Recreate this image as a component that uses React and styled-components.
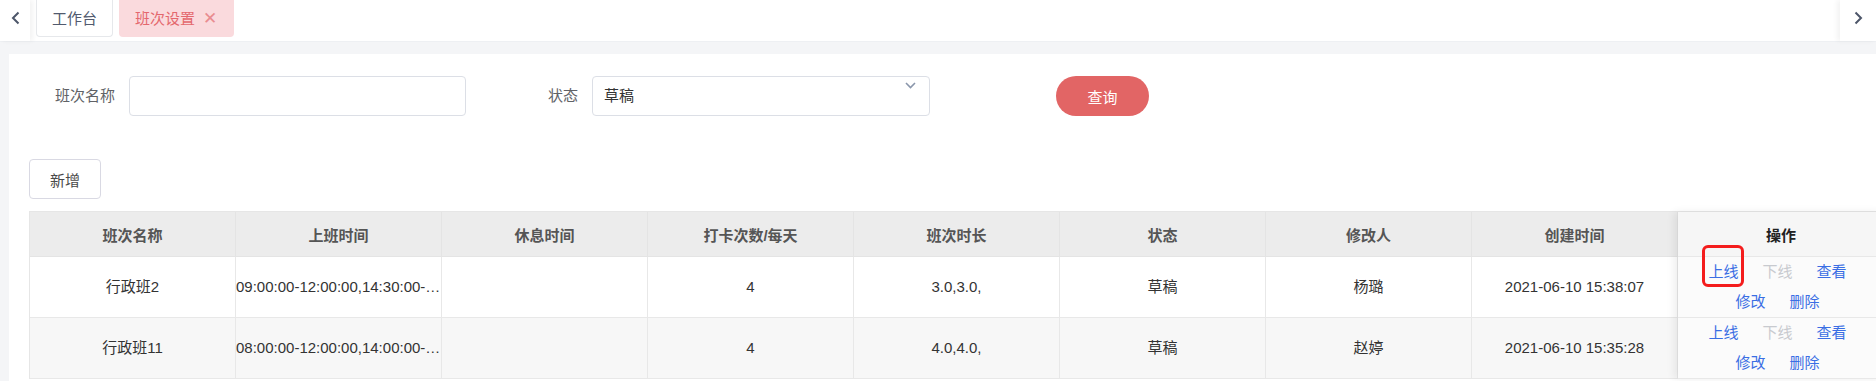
import React from "react";
import styled, { createGlobalStyle } from "styled-components";

const GlobalStyle = createGlobalStyle`
  * { box-sizing: border-box; }
  html, body { margin: 0; padding: 0; background: #f4f5f7; overflow: hidden; }
  body {
    font-family: "Liberation Sans", "Noto Sans CJK SC", sans-serif;
    font-size: 15px;
    color: #333;
  }
`;

const Page = styled.div`
  width: 1876px;
  height: 381px;
  overflow: hidden;
  background: #f4f5f7;
  display: flex;
  flex-direction: column;
`;

const TopBar = styled.div`
  height: 42px;
  flex: none;
  background: #fff;
  display: flex;
  border-bottom: 1px solid #eef0f3;
`;

const ScrollBtn = styled.div`
  width: ${(p) => p.$w}px;
  flex: none;
  display: flex;
  justify-content: center;
  padding-top: 11px;
  background: #fff;
  color: #515a6e;
  box-shadow: ${(p) =>
    p.$side === "left" ? "3px 0 5px rgba(0,0,0,0.05)" : "-3px 0 5px rgba(0,0,0,0.05)"};
`;

const Tabs = styled.div`
  flex: 1;
  display: flex;
  align-items: flex-start;
  gap: 6px;
  padding-left: 6px;
`;

const Tab = styled.div`
  height: 37px;
  display: flex;
  align-items: center;
  gap: 8px;
  padding: ${(p) => (p.$active ? "0 16px 0 15px" : "0 15px")};
  border: 1px solid ${(p) => (p.$active ? "transparent" : "#e6e8eb")};
  border-top: none;
  border-radius: 0 0 4px 4px;
  background: ${(p) => (p.$active ? "#fadadd" : "#fff")};
  color: ${(p) => (p.$active ? "#e4686d" : "#515a6e")};
  line-height: 1;
`;

const CloseMark = styled.span`
  color: #e98c90;
  font-size: 17px;
  line-height: 1;
  width: 14px;
  text-align: center;
`;

const Main = styled.div`
  flex: 1;
  padding: 12px 0 0 9px;
  min-height: 0;
`;

const Panel = styled.div`
  width: 1900px;
  height: 100%;
  background: #fff;
  padding: 22px 20px 0 20px;
`;

const FormRow = styled.div`
  display: flex;
  align-items: center;
  height: 40px;
`;

const FormItem = styled.div`
  display: flex;
  align-items: center;
  margin-right: ${(p) => p.$mr || 0}px;
`;

const Label = styled.label`
  width: 100px;
  padding-right: 14px;
  text-align: right;
  color: #606266;
  line-height: 40px;
`;

const Input = styled.div`
  width: ${(p) => p.$w}px;
  height: 40px;
  border: 1px solid #dcdfe6;
  border-radius: 4px;
  background: #fff;
`;

const Select = styled.div`
  width: 338px;
  height: 40px;
  border: 1px solid #dcdfe6;
  border-radius: 4px;
  background: #fff;
  display: flex;
  justify-content: space-between;
  padding: 0 13px 0 11px;
`;

const SelectValue = styled.span`
  line-height: 38px;
  color: #333;
`;

const Chevron = styled.svg`
  margin-top: 5px;
  flex: none;
`;

const QueryButton = styled.button`
  width: 93px;
  height: 40px;
  border: none;
  border-radius: 20px;
  background: #e26565;
  color: #fff;
  font: inherit;
  padding: 0;
`;

const AddButton = styled.button`
  margin-top: 43px;
  width: 72px;
  height: 40px;
  border: 1px solid #d9d9e3;
  border-radius: 4px;
  background: #fff;
  color: #4a4a4a;
  font: inherit;
  padding: 0;
`;

const Table = styled.div`
  margin-top: 12px;
  display: flex;
  border-top: 1px solid #e6e6e6;
`;

const Grid = styled.div`
  display: grid;
  grid-template-columns: repeat(8, 206px);
  grid-auto-rows: auto;
  border-left: 1px solid #e6e6e6;
`;

const HeadCell = styled.div`
  height: 45px;
  display: flex;
  align-items: center;
  justify-content: center;
  background: #ececec;
  border-right: 1px solid #e4e4e4;
  border-bottom: 1px solid #e4e4e4;
  color: #555;
  font-weight: 700;
`;

const Cell = styled.div`
  height: 61px;
  line-height: 60px;
  padding: 0;
  text-align: center;
  white-space: nowrap;
  overflow: hidden;
  text-overflow: ellipsis;
  background: ${(p) => (p.$stripe ? "#f7f7f7" : "#fff")};
  border-right: 1px solid #e8e8e8;
  border-bottom: 1px solid #e8e8e8;
  color: #333;
`;

const OpsColumn = styled.div`
  width: 206px;
  flex: none;
  display: flex;
  flex-direction: column;
  box-shadow: -4px 0 8px rgba(0, 0, 0, 0.07);
`;

const OpsHead = styled.div`
  height: 45px;
  display: flex;
  align-items: center;
  justify-content: center;
  background: #f6f6f6;
  border-bottom: 1px solid #e8e8e8;
  color: #222;
  font-weight: 700;
`;

const OpsCell = styled.div`
  height: 61px;
  background: #fbfbfb;
  border-bottom: 1px solid #e8e8e8;
  display: flex;
  flex-wrap: wrap;
  justify-content: center;
  align-content: flex-start;
  padding: 0 17px 0 10px;
`;

const Link = styled.span`
  position: relative;
  margin: 0 12px;
  line-height: 30px;
  height: 30px;
  color: ${(p) => (p.$disabled ? "#c8cacf" : "#3a6ee4")};
`;

const Highlight = styled.span`
  position: absolute;
  left: -6px;
  right: -6px;
  top: -12px;
  bottom: 0;
  border: 3px solid #f41d1d;
  border-radius: 6px;
`;

const columns = ["班次名称", "上班时间", "休息时间", "打卡次数/每天", "班次时长", "状态", "修改人", "创建时间"];

const rows = [
  ["行政班2", "09:00:00-12:00:00,14:30:00-18:00:00", "", "4", "3.0,3.0,", "草稿", "杨璐", "2021-06-10 15:38:07"],
  ["行政班11", "08:00:00-12:00:00,14:00:00-18:00:00", "", "4", "4.0,4.0,", "草稿", "赵婷", "2021-06-10 15:35:28"],
];

const Arrow = ({ dir }) => (
  <svg width="9" height="14" viewBox="0 0 9 14">
    <path
      d={dir === "left" ? "M7.5 1.5 L2 7 L7.5 12.5" : "M1.5 1.5 L7 7 L1.5 12.5"}
      fill="none"
      stroke="#4d5669"
      strokeWidth="2"
    />
  </svg>
);

export default function App() {
  return (
    <Page>
      <GlobalStyle />
      <TopBar>
        <ScrollBtn $w={30} $side="left">
          <Arrow dir="left" />
        </ScrollBtn>
        <Tabs>
          <Tab>工作台</Tab>
          <Tab $active>
            班次设置
            <CloseMark>✕</CloseMark>
          </Tab>
        </Tabs>
        <ScrollBtn $w={36} $side="right">
          <Arrow dir="right" />
        </ScrollBtn>
      </TopBar>
      <Main>
        <Panel>
          <FormRow>
            <FormItem $mr={26}>
              <Label>班次名称</Label>
              <Input $w={337} />
            </FormItem>
            <FormItem $mr={126}>
              <Label>状态</Label>
              <Select>
                <SelectValue>草稿</SelectValue>
                <Chevron width="11" height="7" viewBox="0 0 11 7">
                  <path d="M1 1 L5.5 5.5 L10 1" fill="none" stroke="#8a96ab" strokeWidth="1.6" />
                </Chevron>
              </Select>
            </FormItem>
            <QueryButton>查询</QueryButton>
          </FormRow>
          <AddButton>新增</AddButton>
          <Table>
            <Grid>
              {columns.map((c) => (
                <HeadCell key={c}>{c}</HeadCell>
              ))}
              {rows.map((r, i) =>
                r.map((v, j) => (
                  <Cell key={`${i}-${j}`} $stripe={i % 2 === 1}>
                    {v}
                  </Cell>
                ))
              )}
            </Grid>
            <OpsColumn>
              <OpsHead>操作</OpsHead>
              {rows.map((r, i) => (
                <OpsCell key={i}>
                  <Link>
                    上线
                    {i === 0 && <Highlight />}
                  </Link>
                  <Link $disabled>下线</Link>
                  <Link>查看</Link>
                  <Link>修改</Link>
                  <Link>删除</Link>
                </OpsCell>
              ))}
            </OpsColumn>
          </Table>
        </Panel>
      </Main>
    </Page>
  );
}
